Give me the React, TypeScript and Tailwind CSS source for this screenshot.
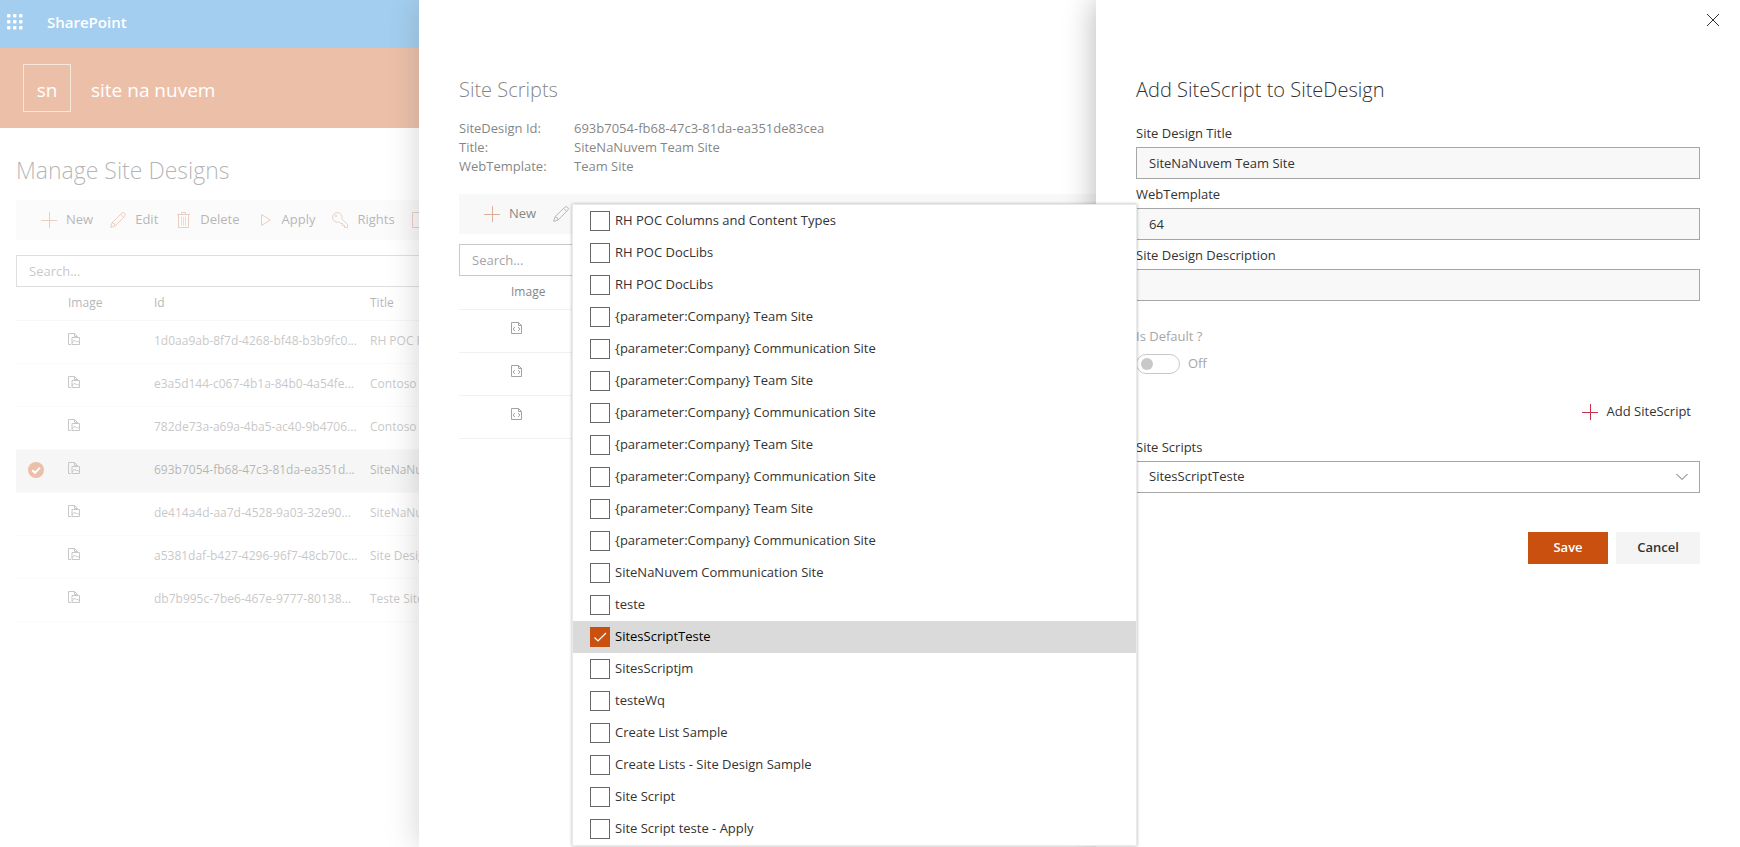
import type { ReactNode } from 'react';

const options: string[] = [
  'RH POC Columns and Content Types',
  'RH POC DocLibs',
  'RH POC DocLibs',
  '{parameter:Company} Team Site',
  '{parameter:Company} Communication Site',
  '{parameter:Company} Team Site',
  '{parameter:Company} Communication Site',
  '{parameter:Company} Team Site',
  '{parameter:Company} Communication Site',
  '{parameter:Company} Team Site',
  '{parameter:Company} Communication Site',
  'SiteNaNuvem Communication Site',
  'teste',
  'SitesScriptTeste',
  'SitesScriptjm',
  'testeWq',
  'Create List Sample',
  'Create Lists - Site Design Sample',
  'Site Script',
  'Site Script teste - Apply',
];

const designs = [
  { id: '1d0aa9ab-8f7d-4268-bf48-b3b9fc0...', title: 'RH POC Portal' },
  { id: 'e3a5d144-c067-4b1a-84b0-4a54fe...', title: 'Contoso Team Site' },
  { id: '782de73a-a69a-4ba5-ac40-9b4706...', title: 'Contoso Communication Site' },
  { id: '693b7054-fb68-47c3-81da-ea351d...', title: 'SiteNaNuvem Team Site', selected: true },
  { id: 'de414a4d-aa7d-4528-9a03-32e90...', title: 'SiteNaNuvem Communication Site' },
  { id: 'a5381daf-b427-4296-96f7-48cb70c...', title: 'Site Design' },
  { id: 'db7b995c-7be6-467e-9777-80138...', title: 'Teste Site' },
];

const iconProps = {
  width: 16,
  height: 16,
  viewBox: '0 0 16 16',
  fill: 'none',
  stroke: 'currentColor',
  strokeWidth: 1,
  'aria-hidden': true,
} as const;

function PlusIcon() {
  return (
    <svg {...iconProps}>
      <path d="M0 8.5H16M8.5 0V16" />
    </svg>
  );
}

function PencilIcon() {
  return (
    <svg {...iconProps}>
      <path d="M.6 15.4 2 10.8 11.8 1.2Q13.2 0 14.7 1.3 16 2.8 14.8 4.2L5.2 14 .6 15.4ZM10.6 2.4l3 3M2 10.8Q4.8 11 5.2 14" />
    </svg>
  );
}

function TrashIcon() {
  return (
    <svg {...iconProps}>
      <path d="M2 2.5H15M6.5 2.5V.5H10.5V2.5M3.5 2.5V15.5H13.5V2.5" />
      <path d="M6.5 5V13.5M8.5 5V13.5M10.5 5V13.5" opacity=".7" />
    </svg>
  );
}

function PlayIcon() {
  return (
    <svg {...iconProps}>
      <path d="M4.5 2.5V13.5L13.2 8Z" />
    </svg>
  );
}

function KeyIcon() {
  return (
    <svg {...iconProps}>
      <path d="M6.9 9.9A4.8 4.8 0 1 1 9.9 6.8L15.5 12.4V15.5H12.5V13.5H10.5V11.5H8.5Z" />
      <circle cx="4" cy="4" r=".7" />
    </svg>
  );
}

function PageIcon() {
  return (
    <svg {...iconProps}>
      <path d="M.5.5H10.5L14.5 4.5V15.5H.5Z" />
    </svg>
  );
}

function DesignIcon() {
  return (
    <svg {...iconProps} className="block" width={12} height={12} viewBox="0 0 12 12">
      <path d="M3 11.5H.5V.5H6.5L9.5 3.5M6.5.5V3.5H9.5M4 4.5H11.5V11.5H4ZM4 10 6.5 7 8.5 9 9.5 8 11.5 10" />
    </svg>
  );
}

function ScriptIcon() {
  return (
    <svg {...iconProps} className="block" width={12} height={12} viewBox="0 0 12 12">
      <path d="M.5.5H7.5L10.5 3.5V11.5H.5ZM7.5.5V3.5H10.5M3.8 5 2.2 7 3.8 9M7.2 5 8.8 7 7.2 9" />
    </svg>
  );
}

function Command({ icon, label }: { icon: ReactNode; label: string }) {
  return (
    <button type="button" className="flex h-10 items-center gap-[9px] text-[#333]">
      <span className="text-[#b8501c] opacity-75">{icon}</span>
      {label}
    </button>
  );
}

function SiteDesignsPage() {
  return (
    <div className="h-full overflow-hidden">
      <header>
        <div className="flex h-12 items-center bg-[#0078d4] px-[7px] pb-1 text-white">
          <button type="button" aria-label="App launcher" className="w-10">
            <svg width="16" height="16" viewBox="0 0 16 16" fill="currentColor" aria-hidden="true">
              {[0, 6, 12].map((y) =>
                [0, 6, 12].map((x) => (
                  <rect key={`${x}-${y}`} x={x} y={y} width="3.5" height="3.5" rx="1" />
                )),
              )}
            </svg>
          </button>
          <a href="#home" className="text-[15px] font-semibold">SharePoint</a>
        </div>
        <div className="flex h-20 items-center gap-5 bg-[#ca5010] px-[23px] text-[19px] leading-6 text-white">
          <div className="flex size-12 items-center justify-center border border-white/60 pt-1">sn</div>
          <a href="#site" className="pt-1">site na nuvem</a>
        </div>
      </header>
      <main className="px-4 pt-[26px]">
        <h1 className="text-[23px] leading-8 font-light text-[#333]">Manage Site Designs</h1>
        <div className="mt-[14px] flex h-10 items-center gap-[17px] bg-[#f4f4f4] px-[25px]">
          <Command icon={<PlusIcon />} label="New" />
          <Command icon={<PencilIcon />} label="Edit" />
          <Command icon={<TrashIcon />} label="Delete" />
          <Command icon={<PlayIcon />} label="Apply" />
          <Command icon={<KeyIcon />} label="Rights" />
          <Command icon={<PageIcon />} label="Site Scripts" />
        </div>
        <input
          type="search"
          aria-label="Search site designs"
          placeholder="Search..."
          className="mt-[15px] block h-8 w-full border border-[#a6a6a6] px-3 placeholder:text-[#666]"
        />
        <table className="w-full table-fixed border-collapse text-left text-xs">
          <colgroup>
            <col className="w-[52px]" />
            <col className="w-[86px]" />
            <col className="w-[216px]" />
            <col />
          </colgroup>
          <thead>
            <tr className="h-[33px] border-b border-[#eaeaea] text-[#333]">
              <th aria-label="Selected" />
              <th className="font-normal">Image</th>
              <th className="font-normal">Id</th>
              <th className="font-normal">Title</th>
            </tr>
          </thead>
          <tbody className="align-top">
            {designs.map((d) => (
              <tr
                key={d.id}
                className={
                  d.selected
                    ? 'h-[43px] border-b border-[#f4f4f4] bg-[#e8e8e8] text-[#333]'
                    : 'h-[43px] border-b border-[#f4f4f4] text-[#666]'
                }
              >
                <td className="px-3 pt-3">
                  {d.selected && (
                    <svg className="block" width="16" height="16" viewBox="0 0 16 16" aria-label="Selected" role="img">
                      <circle cx="8" cy="8" r="8" fill="#ca5010" />
                      <path d="M4.2 8.2 7 10.8 12 5.6" fill="none" stroke="#fff" strokeWidth="2" />
                    </svg>
                  )}
                </td>
                <td className="pt-3 text-[#666]"><DesignIcon /></td>
                <td className="pt-3">{d.id}</td>
                <td className="pt-3">{d.title}</td>
              </tr>
            ))}
          </tbody>
        </table>
      </main>
    </div>
  );
}

function SiteScriptsPanel() {
  return (
    <section
      aria-label="Site Scripts"
      className="absolute inset-y-0 right-0 w-[1321px] max-w-full overflow-hidden bg-white px-10 pt-[74px] shadow-[0_0_30px_rgba(0,0,0,0.3)]"
    >
      <h2 className="text-xl leading-8 font-light text-[#333]">Site Scripts</h2>
      <dl className="mt-[13px] grid grid-cols-[115px_1fr] leading-[19px] text-[#333]">
        <dt>SiteDesign Id:</dt>
        <dd>693b7054-fb68-47c3-81da-ea351de83cea</dd>
        <dt>Title:</dt>
        <dd>SiteNaNuvem Team Site</dd>
        <dt>WebTemplate:</dt>
        <dd>Team Site</dd>
      </dl>
      <div className="mt-[18px] flex h-10 items-center gap-[17px] bg-[#f4f4f4] px-[25px]">
        <Command icon={<PlusIcon />} label="New" />
        <button type="button" disabled className="flex items-center gap-[9px] text-[#888]">
          <PencilIcon />
          Edit
        </button>
      </div>
      <input
        type="search"
        aria-label="Search site scripts"
        placeholder="Search..."
        className="mt-[10px] block h-8 w-full border border-[#a6a6a6] px-3 placeholder:text-[#666]"
      />
      <table className="w-full table-fixed border-collapse text-left text-xs">
        <colgroup>
          <col className="w-[52px]" />
          <col />
        </colgroup>
        <thead>
          <tr className="h-[33px] border-b border-[#eaeaea] text-[#333]">
            <th aria-label="Selected" />
            <th className="font-normal">Image</th>
          </tr>
        </thead>
        <tbody className="align-top">
          {[1, 2, 3].map((n) => (
            <tr key={n} className="h-[43px] border-b border-[#eaeaea] text-[#666]">
              <td />
              <td className="pt-3"><ScriptIcon /></td>
            </tr>
          ))}
        </tbody>
      </table>
    </section>
  );
}

function ReadOnlyField({ id, label, value }: { id: string; label: string; value: string }) {
  return (
    <div>
      <label htmlFor={id} className="block h-[29px] leading-[30px]">{label}</label>
      <input
        id={id}
        type="text"
        readOnly
        value={value}
        className="block h-8 w-full border border-[#a6a6a6] bg-[#f8f8f8] px-3"
      />
    </div>
  );
}

function AddSiteScriptPanel() {
  return (
    <section
      aria-label="Add SiteScript to SiteDesign"
      className="absolute inset-y-0 right-0 w-[644px] max-w-full bg-white text-[#333] shadow-[0_0_30px_rgba(0,0,0,0.3)]"
    >
      <div className="flex justify-end px-5 pt-[13px]">
        <button type="button" aria-label="Close" className="h-[14px]">
          <svg width="14" height="14" viewBox="0 0 14 14" fill="none" stroke="#333" aria-hidden="true">
            <path d="M1 1 13 13M13 1 1 13" />
          </svg>
        </button>
      </div>
      <form className="px-10 pt-[47px]" onSubmit={(e) => e.preventDefault()}>
        <h2 className="text-xl leading-8 font-light">Add SiteScript to SiteDesign</h2>
        <div className="mt-3">
          <ReadOnlyField id="design-title" label="Site Design Title" value="SiteNaNuvem Team Site" />
          <ReadOnlyField id="web-template" label="WebTemplate" value="64" />
          <ReadOnlyField id="design-description" label="Site Design Description" value="" />
        </div>
        <div className="mt-5 text-[#a6a6a6]">
          <label htmlFor="is-default" className="block h-[29px] leading-[30px]">Is Default ?</label>
          <div className="mt-1 flex h-5 items-center gap-2">
            <input
              id="is-default"
              type="checkbox"
              role="switch"
              disabled
              className="h-5 w-11 appearance-none rounded-full border border-[#c8c8c8] px-1 py-[3px] before:block before:size-3 before:rounded-full before:bg-[#c8c8c8]"
            />
            Off
          </div>
        </div>
        <div className="mt-[18px] flex justify-end">
          <button type="button" className="flex h-10 items-center gap-[9px] px-[9px]">
            <span className="text-[#c8304a]"><PlusIcon /></span>
            Add SiteScript
          </button>
        </div>
        <label htmlFor="site-scripts" className="block h-[29px] leading-[30px]">Site Scripts</label>
        <div className="relative">
          <select
            id="site-scripts"
            defaultValue="SitesScriptTeste"
            className="block h-8 w-full appearance-none border border-[#a6a6a6] bg-white px-3"
          >
            <option>SitesScriptTeste</option>
          </select>
          <svg className="pointer-events-none absolute top-3 right-3" width="12" height="8" viewBox="0 0 12 8" fill="none" stroke="#666" aria-hidden="true">
            <path d="M.5 1 6 6.5 11.5 1" />
          </svg>
        </div>
        <div className="mt-[39px] flex justify-end gap-2 font-semibold">
          <button type="submit" className="h-8 w-20 bg-[#ca5010] text-white">Save</button>
          <button type="button" className="h-8 w-[84px] bg-[#f4f4f4]">Cancel</button>
        </div>
      </form>
    </section>
  );
}

function ScriptsCallout() {
  return (
    <div className="absolute top-[204px] right-[603px] w-[565px] border border-[#eaeaea] bg-white text-[#333] shadow-[0_0_3px_rgba(0,0,0,0.3)]">
      {options.map((label, i) => {
        const checked = label === 'SitesScriptTeste';
        return (
          <label
            key={i}
            className={
              checked
                ? 'flex h-8 items-center gap-[5px] bg-[#dadada] px-[17px] text-black'
                : 'flex h-8 items-center gap-[5px] px-[17px]'
            }
          >
            <span className="relative size-5">
              <input
                type="checkbox"
                defaultChecked={checked}
                className="block size-5 appearance-none border border-[#666] bg-white checked:border-[#ca5010] checked:bg-[#ca5010]"
              />
              {checked && (
                <svg className="pointer-events-none absolute inset-0" width="20" height="20" viewBox="0 0 20 20" fill="none" stroke="#fff" aria-hidden="true">
                  <path d="M4.5 10.5 8 14 16 6" strokeWidth="1.2" />
                </svg>
              )}
            </span>
            {label}
          </label>
        );
      })}
    </div>
  );
}

export default function App() {
  return (
    <div className="relative h-screen overflow-hidden bg-white font-['Open_Sans',sans-serif] text-[13px]">
      <SiteDesignsPage />
      <div className="absolute inset-0 bg-white/40" />
      <SiteScriptsPanel />
      <div className="absolute inset-0 bg-white/40" />
      <AddSiteScriptPanel />
      <ScriptsCallout />
    </div>
  );
}
